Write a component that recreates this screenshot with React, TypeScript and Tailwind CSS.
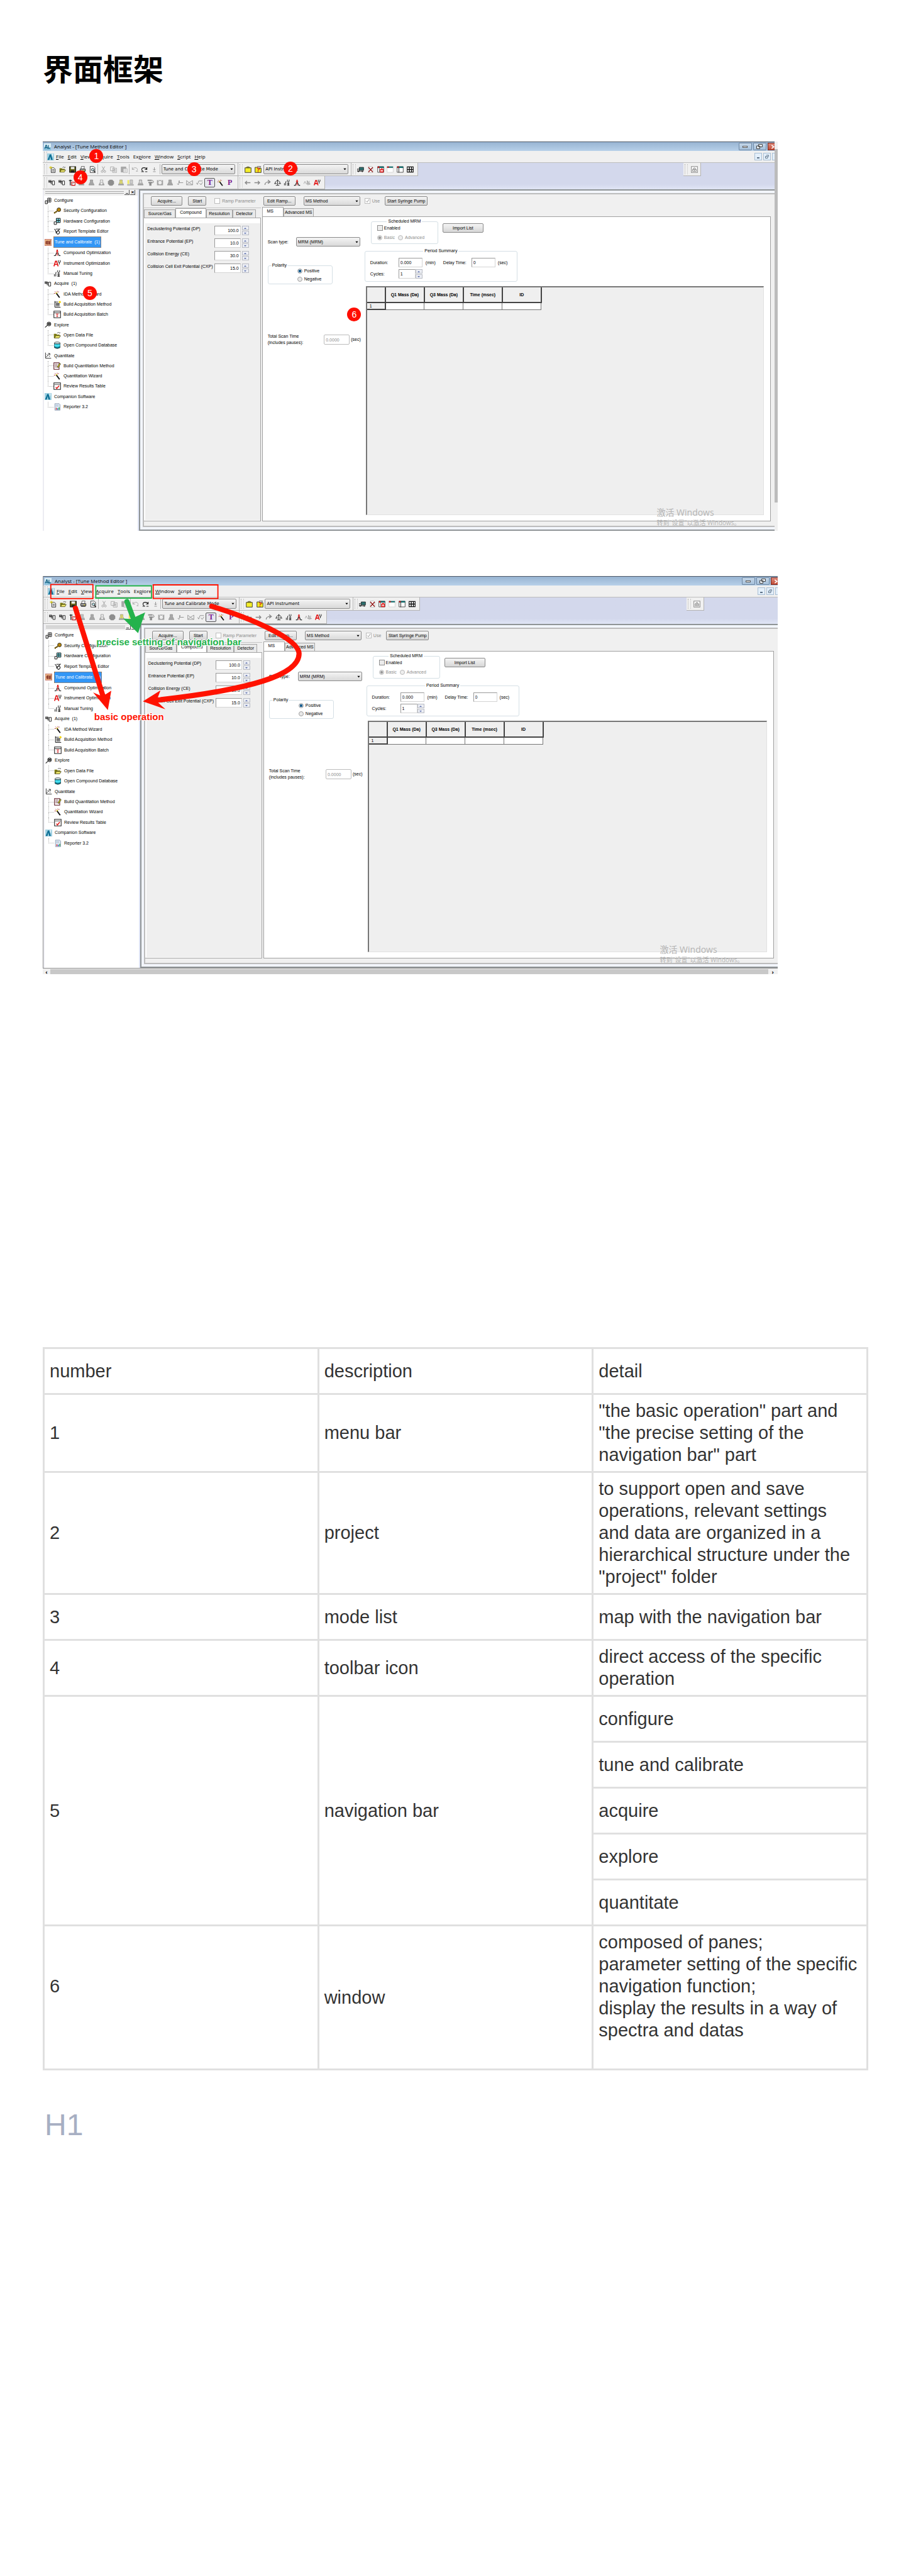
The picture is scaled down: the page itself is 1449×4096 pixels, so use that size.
import { useId, type ReactNode } from "react";

/* ---------- icon drawings, all on a 16 x 16 grid ---------- */

const tower = (fill: string, extra?: ReactNode) => (
  <>
    <path d="M5 1.500h6v5l2 4H3l2-4z" fill={fill} stroke="#8f8f8f" />
    <path d="M1.500 11h13v3h-13z" fill="#9a9a9a" />
    {extra}
  </>
);

const peak = (
  <>
    <path d="M1 14h3l3-7M15 14h-3L9 7M4.500 14v-2M11.500 14v-2" fill="none" stroke="#222" strokeWidth="1.500" />
    <path d="M8 2v12M5.500 5h5" stroke="#e01010" strokeWidth="1.600" />
    <circle cx="8" cy="2.500" r="1.500" fill="#e01010" />
  </>
);

const analyst = (
  <>
    <rect width="16" height="16" fill="#9fd0e2" />
    <path d="M1 15 6 2h3l4 13H9L7 7l-2 8z" fill="#0c6e93" />
    <path d="M11 2h3M12.500 1v6" stroke="#fff" strokeWidth="1.300" />
  </>
);

const folder = (
  <>
    <path d="M1 5h5l1.500 1.500H13V9H5l-2 5H1z" fill="#7c7a12" />
    <path d="M5 9h10l-3 5H2z" fill="#efe86a" stroke="#33320a" />
    <path d="M8 4c2-3 4-2 5 0l1-2" fill="none" stroke="#222" />
  </>
);

const wand = (
  <>
    <path d="M6 5.500 13 15" stroke="#111" strokeWidth="2.500" />
    <path d="M1 6h3M3 2l2 2M8 1v2M11 2l-1 2" stroke="#a33" strokeWidth="1.200" />
    <path d="M5 6.500 8 4" stroke="#d8c800" strokeWidth="1.500" />
  </>
);

const pump = (
  <>
    <path d="M1 3h5v4H1zM2 5h9" fill="none" stroke="#333" strokeWidth="1.500" />
    <path d="M9 4h5v9H9z" fill="#fff" stroke="#222" strokeWidth="1.400" />
    <path d="M4 8h6M5 10h4" stroke="#666" strokeWidth="1.500" />
  </>
);

const tuning = (
  <>
    <path d="M2 14V9M5 14V7q0-2 1.500-2" fill="none" stroke="#333" strokeWidth="1.500" />
    <path d="M9 1v4q2 2 4 0V1M11 6v2M8.500 9h5M11 9v5M8.500 14h5M8.500 11.500h5" fill="none" stroke="#222" strokeWidth="1.300" />
  </>
);

const instrument = (
  <>
    <path d="M1 14 4.500 3h2L10 14M3 10h5.500" fill="none" stroke="#e01010" strokeWidth="2.200" />
    <path d="M10.500 1v4q2 2 4 0V1M12.500 6v4" fill="none" stroke="#222" strokeWidth="1.400" />
  </>
);

const grid = (
  <>
    <path d="M7 1.500h7.500v9H7zM7 6h7.500M10.700 1.500v9" fill="#fff" stroke="#111" strokeWidth="1.300" />
    <path d="M1.500 7.500h5v7h-5z" fill="#ddd" stroke="#111" strokeWidth="1.300" />
  </>
);

const pane = (body: ReactNode) => (
  <>
    <path d="M1 1.500h14v13H1z" fill="#fff" stroke="#333" strokeWidth="1.200" />
    <path d="M1 1h14v3.500H1z" fill="#0e6a6a" />
    {body}
  </>
);

const ICONS: Record<string, ReactNode> = {
  analyst,
  folder,
  wand,
  pump,
  tuning,
  instrument,
  grid,
  peak,
  al: (
    <>
      <rect width="16" height="16" fill="#d9edf5" />
      <path d="M0 9h16v7H0z" fill="#8fc4dc" />
      <path d="M2 12 4.500 4h1L8 12M3 9.500h4M10 4v7.500h4" fill="none" stroke="#0c5c80" strokeWidth="1.800" />
    </>
  ),
  fresh: (
    <>
      <path d="M5 4h6l3 3v8H5z" fill="#fff" stroke="#222" strokeWidth="1.300" />
      <path d="M7 8h5M7 10h5M7 12h5" stroke="#333" />
      <path d="M4 0v7M0 3.500h8M1.500 1l5 5M6.500 1l-5 5" stroke="#d6c400" />
    </>
  ),
  save: (
    <>
      <path d="M1 1.500h14v13H1z" fill="#6b6a1c" stroke="#111" strokeWidth="1.600" />
      <path d="M4 2h8v5H4z" fill="#eee" />
      <path d="M4 10h8v5H4z" fill="#222" />
    </>
  ),
  print: (
    <>
      <path d="M5 1h7l-1 6H4z" fill="#fff" stroke="#222" />
      <path d="M2 7h12v5H2z" fill="#aaa" stroke="#222" strokeWidth="1.300" />
      <path d="M3 13h10" stroke="#222" strokeWidth="2" />
      <path d="M9 10h3" stroke="#d8c800" strokeWidth="1.500" />
    </>
  ),
  preview: (
    <>
      <path d="M2 1h8l3 3v11H2z" fill="#fff" stroke="#222" strokeWidth="1.200" />
      <circle cx="8" cy="8.500" r="3" fill="#bfe9ee" stroke="#222" strokeWidth="1.300" />
      <path d="m10 11 4 4" stroke="#222" strokeWidth="2" />
    </>
  ),
  cut: (
    <g fill="none" stroke="#9a9a9a" strokeWidth="1.300">
      <path d="m5 1 5 9M11 1 6 10" />
      <circle cx="5" cy="12.500" r="2.200" />
      <circle cx="11" cy="12.500" r="2.200" />
    </g>
  ),
  copy: (
    <g fill="#f4f4f4" stroke="#a0a0a0" strokeWidth="1.200">
      <path d="M1 2h8v9H1zM6 5h9v10H6z" />
      <path d="M8 8h5M8 10h5M8 12h5" />
    </g>
  ),
  paste: (
    <>
      <path d="M1 2h11v12H1z" fill="#a8a8a8" stroke="#999" />
      <path d="M6 6h9v9H6z" fill="#f4f4f4" stroke="#a0a0a0" />
      <path d="M8 9h5M8 12h5" stroke="#a0a0a0" />
    </>
  ),
  undo: <path d="M2 3v5h5M2 8c2-5 11-6 12 0 0 2-1 3-3 4h4" fill="none" stroke="#aaa" strokeWidth="1.400" />,
  redo: <path d="M14 3v5H9M14 8C12 3 3 2 2 8c0 2 1 3 3 4M1 13h6M10 13h5" fill="none" stroke="#222" strokeWidth="1.600" />,
  more: <path d="M8 3v7M5 7l3 3 3-3M5 13h6" fill="none" stroke="#888" strokeWidth="1.300" />,
  clip: (
    <>
      <path d="M1 4h14v11H1z" fill="#f4ee2a" stroke="#222" strokeWidth="1.200" />
      <path d="M4 4c0-3 8-3 8 0z" fill="#c8c21c" stroke="#222" />
    </>
  ),
  help: (
    <>
      <path d="M1 3h6l1 2h7v10H1z" fill="#f0e820" stroke="#222" strokeWidth="1.200" />
      <path d="M6 6q3-3 5 0 0 2-3 3v2M8 12.500v2" fill="none" stroke="#d01010" strokeWidth="1.600" />
      <path d="M6 1h8l-2 3" fill="none" stroke="#222" />
    </>
  ),
  truck: (
    <>
      <path d="M5 3h10v7H5z" fill="#2b6f6f" stroke="#222" strokeWidth="1.200" />
      <path d="M0 7h5v5H0zM3 12h12" fill="#ccc" stroke="#222" strokeWidth="1.200" />
      <circle cx="3" cy="12.500" r="1.500" fill="#222" />
      <circle cx="12" cy="12.500" r="1.500" fill="#222" />
    </>
  ),
  remove: (
    <>
      <path d="M3 1h8l2 2v12H3z" fill="#fff" stroke="#aaa" />
      <path d="m3 3 10 11M13 3 3 14" stroke="#8c1010" strokeWidth="2" />
    </>
  ),
  paneLock: pane(
    <>
      <path d="M1 1h4v3.500H1z" fill="#d01010" />
      <path d="M5 4v10" stroke="#333" />
      <path d="M7 8h7v6H7zM8.500 8c0-3 4-3 4 0" fill="#f6b0b0" stroke="#e01010" strokeWidth="1.500" />
    </>,
  ),
  paneDots: (
    <>
      <path d="M1 4h14v10.500H1z" fill="#fff" stroke="#999" strokeDasharray="1.500 1.500" />
      <path d="M1 1h14v3H1z" fill="#0e6a6a" />
      <path d="M1 1h4v3H1z" fill="#d01010" />
    </>
  ),
  paneSide: pane(
    <>
      <path d="M5 4v11" stroke="#333" strokeWidth="1.500" />
      <path d="M1 1h4v3H1z" fill="#d01010" />
    </>,
  ),
  paneGrid: (
    <>
      <path d="M1 2h14v12H1z" fill="#fff" stroke="#111" strokeWidth="1.600" />
      <path d="M6 2v12M11 2v12M1 8h14" stroke="#111" strokeWidth="2" />
    </>
  ),
  lock: <path d="M1 1h14v14H1zM4 8h8v4H4zM5.500 8c0-5 5-5 5 0M8 9v3" fill="#fff" stroke="#888" strokeWidth="1.500" />,
  gauge: (
    <>
      <path d="M1 3h7M4 1v13" stroke="#222" strokeWidth="1.800" />
      <path d="M7 7h8v7H7z" fill="#fff" stroke="#c01010" strokeWidth="1.500" />
      <path d="m8 12 4-4" stroke="#222" />
    </>
  ),
  t1: tower("#d4d4d4", <path d="M8 3v7" stroke="#888" />),
  t2: tower("#a8a8a8"),
  t3: tower("#e8e8e8", <circle cx="8" cy="10" r="3" fill="#eee" stroke="#999" />),
  stop: <path d="M5 1h6l4 4v6l-4 4H5l-4-4V5z" fill="#8e8e8e" />,
  t4: tower("#f1ea5e", <path d="M8 2v8" stroke="#999" />),
  t5: (
    <>
      <path d="M1 2h4v9H1z" fill="#f1ea5e" />
      <path d="M7 1.500h6v9H7zM1 12h14v2H1z" fill="#ccc" stroke="#999" />
    </>
  ),
  t6: tower("#b8b8b8", <path d="M7 3v6M9 3v6" stroke="#fff" />),
  t7: (
    <>
      <path d="M1 1h10v3H1zM3 6h9v3H3zM5 9h5v6H5z" fill="#8c8c8c" />
      <path d="m12 2 3 4-3 3" fill="none" stroke="#999" strokeWidth="1.500" />
    </>
  ),
  t8: (
    <>
      <path d="M1 2h14v12H1z" fill="#a4a4a4" />
      <circle cx="8" cy="8" r="4" fill="#ececec" />
      <path d="m3 2 5 4 5-4" fill="none" stroke="#fff" />
    </>
  ),
  line1: <path d="m1 10 3 3L6 3v5h9" fill="none" stroke="#8c8c8c" strokeWidth="1.300" />,
  line2: <path d="M1 13V3l6 5 8-5v10H1l6-5 8 5" fill="none" stroke="#8c8c8c" strokeWidth="1.200" />,
  line3: <path d="m0 8 3 4 3-8h9M8 9l3 4 4-6" fill="none" stroke="#8c8c8c" strokeWidth="1.300" />,
  back: <path d="M15 8H3M7 4 3 8l4 4" fill="none" stroke="#888" strokeWidth="2" />,
  forward: <path d="M1 8h12M9 4l4 4-4 4" fill="none" stroke="#888" strokeWidth="2" />,
  turn: <path d="M2 13c0-6 4-7 11-7M9 2l5 4-5 4" fill="none" stroke="#888" strokeWidth="2" />,
  scale: <path d="M8 1v13M2 7l6-5 6 5M0 10h6M10 10h6M3 7v3M13 7v3M4 14h8" fill="none" stroke="#222" strokeWidth="1.300" />,
  wave: <path d="m0 11 3-6 3 6M8 11V3l5 8M6 11h10M10 5v9M13 4v9" fill="none" stroke="#999" strokeWidth="1.100" />,
  key: (
    <>
      <circle cx="11.500" cy="6" r="4" fill="#b8860b" stroke="#222" strokeWidth="1.200" />
      <path d="M9 8 1 13M3 12v2M6 10v2" stroke="#6b5208" strokeWidth="2" />
    </>
  ),
  hardware: (
    <>
      <path d="M6 1.500h8.500v9H6zM6 6h8.500M10.200 1.500v9" fill="#7fe3ee" stroke="#111" strokeWidth="1.300" />
      <path d="M1.500 9h5v5.500h-5z" fill="#fff" stroke="#111" strokeWidth="1.300" />
    </>
  ),
  report: <path d="M2 3q3 2 3 5t4 6q4-1 4-5L10 6 6 9M5 3h8M9 8l5-6M5 12l3-3" fill="#fff" stroke="#222" strokeWidth="1.400" />,
  tune: (
    <>
      <path d="M0 1h16v14H0z" fill="#f3c48f" stroke="#a33" />
      <path d="M3 5v7M5 4v8h2V4M9 4v8h2V5M13 3v10" fill="none" stroke="#6b0f0f" strokeWidth="1.300" />
    </>
  ),
  method: (
    <>
      <path d="M3 1v13M3 3h7M3 14h12M5 6h8M5 8.500h8M5 11h8" stroke="#222" strokeWidth="1.400" />
      <circle cx="13.500" cy="3" r="2.200" fill="#f5d400" />
    </>
  ),
  batch: (
    <>
      <path d="M1 1h14v14H1z" fill="#fff" stroke="#222" strokeWidth="1.400" />
      <path d="M1 4.500h14" stroke="#222" strokeWidth="1.200" />
      <path d="M5 7h6M8 7v6M6 11l2 2 2-2" stroke="#d01010" strokeWidth="1.200" fill="none" />
    </>
  ),
  explore: (
    <>
      <circle cx="10" cy="6" r="4.500" fill="#aaa" stroke="#222" strokeWidth="1.300" />
      <path d="m7 4 6 4M13 4 7 8M6.500 9 1 14" stroke="#222" strokeWidth="1.600" />
    </>
  ),
  database: (
    <>
      <path d="M2 3v10q6 4 12 0V3z" fill="#0f7f94" stroke="#222" />
      <path d="M2 6v4q6 3 12 0V6z" fill="#46dff0" />
      <ellipse cx="8" cy="3" rx="6" ry="2" fill="#dff6fa" stroke="#222" />
    </>
  ),
  quant: <path d="M2 1v13h13M3 12l9-9M5 5l2 2M10 9l2 1M12 3v4M12 3H8" fill="none" stroke="#222" strokeWidth="1.300" />,
  quantMethod: (
    <>
      <path d="M1 1h11v14H1z" fill="#fff" stroke="#5a1520" strokeWidth="1.400" />
      <path d="M3 4h6M3 7h5M3 10h6" stroke="#5a1520" />
      <path d="m8 10 5-8 2 1.500-5 8z" fill="#f0e020" stroke="#111" />
    </>
  ),
  results: (
    <>
      <path d="M1 1h14v14H1z" fill="#fff" stroke="#222" strokeWidth="1.400" />
      <path d="M1 4.500h14" stroke="#888" strokeWidth="2" />
      <path d="m5 10 2 3 5-6" fill="none" stroke="#e01010" strokeWidth="1.800" />
    </>
  ),
  reporter: (
    <>
      <path d="M3 1h9l2 2v12H3z" fill="#dfeaf6" stroke="#7d8fa6" />
      <path d="M5 4h6M5 6.500h6" stroke="#7d8fa6" strokeDasharray="1.500 1" />
      <path d="M5 10h2v4H5z" fill="#d03030" />
      <path d="M8 11h2v3H8z" fill="#2a56c8" />
      <path d="M11 9h2v5h-2z" fill="#2fb04a" />
    </>
  ),
};

function Icon({ name, className = "size-[11px]" }: { name: string; className?: string }) {
  return (
    <svg viewBox="0 0 16 16" className={`${className} shrink-0`} aria-hidden="true">
      {ICONS[name]}
    </svg>
  );
}

/* ---------- small controls ---------- */

function Grip() {
  return (
    <span className="flex h-[16px] w-[5px] shrink-0 justify-between self-center">
      <span className="w-px border-l border-dotted border-[#b0b0b0]" />
      <span className="w-px border-l border-dotted border-[#c4c4c4]" />
    </span>
  );
}

function ToolButton({ name }: { name: string }) {
  return (
    <button type="button" aria-label={name} className="flex min-w-0 flex-1 items-center justify-center">
      <Icon name={name} />
    </button>
  );
}

function Letter({ children, framed }: { children: string; framed?: boolean }) {
  return (
    <button
      type="button"
      className={
        framed
          ? "flex h-[15px] w-[17px] shrink-0 items-center justify-center rounded-[2px] border border-[#555] bg-[#e6e6ee] font-['Liberation_Serif',serif] text-[12px] leading-none font-bold text-[#7a1a8c]"
          : "flex min-w-0 flex-1 items-center justify-center font-['Liberation_Serif',serif] text-[12px] leading-none font-bold text-[#7a1a8c]"
      }
    >
      {children}
    </button>
  );
}

function Separator() {
  return <span className="h-[16px] w-px shrink-0 self-center bg-[#b5b5b5]" />;
}

function Select({ label, value, className, textClass = "" }: { label: string; value: string; className: string; textClass?: string }) {
  return (
    <span className={`relative block shrink-0 ${className}`}>
      <select
        aria-label={label}
        defaultValue={value}
        className={`block h-full w-full appearance-none rounded-[2px] border border-[#8a8a8a] bg-linear-to-b from-[#f4f4f4] to-[#d9d9d9] pl-[2px] ${textClass}`}
      >
        <option>{value}</option>
      </select>
      <svg viewBox="0 0 6 4" className="pointer-events-none absolute top-1/2 right-[3px] h-[3px] w-[5px] -translate-y-1/2" aria-hidden="true">
        <path d="M0 0h6L3 4z" fill="#000" />
      </svg>
    </span>
  );
}

function PushButton({ children, className }: { children: string; className: string }) {
  return (
    <button
      type="button"
      className={`h-[15px] shrink-0 rounded-[2px] border border-[#8a8a8a] bg-linear-to-b from-[#f5f5f5] to-[#d6d6d6] text-center whitespace-nowrap ${className}`}
    >
      {children}
    </button>
  );
}

function Check({ label, checked, dim }: { label: string; checked?: boolean; dim?: boolean }) {
  return (
    <label className={dim ? "flex items-center gap-[3px] whitespace-nowrap text-[#8c8c8c]" : "flex items-center gap-[2px] whitespace-nowrap"}>
      <span className="relative block size-[9px]">
        <input
          type="checkbox"
          defaultChecked={checked}
          disabled={dim}
          className={dim ? "block size-full appearance-none border border-[#bdbdbd] bg-white" : "block size-full appearance-none border border-[#8f8f8f] bg-[#ececec]"}
        />
        {checked && (
          <svg viewBox="0 0 9 9" className="pointer-events-none absolute inset-0" aria-hidden="true">
            <path d="m2 4.500 2 2L7 2" fill="none" stroke="#999" />
          </svg>
        )}
      </span>
      {label}
    </label>
  );
}

function Radio({ label, name, checked, dim }: { label: string; name: string; checked?: boolean; dim?: boolean }) {
  return (
    <label className={dim ? "flex items-center gap-[3px] whitespace-nowrap text-[#8c8c8c]" : "flex items-center gap-[3px] whitespace-nowrap"}>
      <input
        type="radio"
        name={name}
        defaultChecked={checked}
        disabled={dim}
        className={
          dim
            ? "block size-[8px] appearance-none rounded-full border border-[#b9b9b9] bg-[#eeeeee] checked:bg-[radial-gradient(circle,#999_45%,#eee_55%)]"
            : "block size-[8px] appearance-none rounded-full border border-[#a0a0a0] bg-[#e8e8e8] checked:bg-[radial-gradient(circle,#1d5f8f_50%,#dfe9f2_60%)]"
        }
      />
      {label}
    </label>
  );
}

function Spinner() {
  return (
    <span className="flex h-[15px] w-[11px] shrink-0 flex-col gap-px">
      {["m0 3 2-2 2 2z", "M0 1h4L2 3z"].map((d, i) => (
        <button
          key={d}
          type="button"
          aria-label={i === 0 ? "Increase" : "Decrease"}
          className="flex flex-1 items-center justify-center border border-[#b9bcc4] bg-[#eceef4]"
        >
          <svg viewBox="0 0 4 4" className="size-[4px]" aria-hidden="true">
            <path d={d} fill="#5568a8" />
          </svg>
        </button>
      ))}
    </span>
  );
}

const field = "block h-[15px] border border-[#d4d4d4] border-t-[#9a9a9a] border-l-[#9a9a9a] bg-white px-[2px]";

/* ---------- application data ---------- */

const MENU: [string, string, string][] = [
  ["", "F", "ile"],
  ["", "E", "dit"],
  ["", "V", "iew"],
  ["", "A", "cquire"],
  ["", "T", "ools"],
  ["Ex", "p", "lore"],
  ["", "W", "indow"],
  ["", "S", "cript"],
  ["", "H", "elp"],
];

type Node = { label: string; icon: string; root?: boolean; selected?: boolean; last?: boolean };

const TREE: Node[] = [
  { label: "Configure", icon: "grid", root: true },
  { label: "Security Configuration", icon: "key" },
  { label: "Hardware Configuration", icon: "hardware" },
  { label: "Report Template Editor", icon: "report", last: true },
  { label: "Tune and Calibrate  (1)", icon: "tune", root: true, selected: true },
  { label: "Compound Optimization", icon: "peak" },
  { label: "Instrument Optimization", icon: "instrument" },
  { label: "Manual Tuning", icon: "tuning", last: true },
  { label: "Acquire  (1)", icon: "pump", root: true },
  { label: "IDA Method Wizard", icon: "wand" },
  { label: "Build Acquisition Method", icon: "method" },
  { label: "Build Acquisition Batch", icon: "batch", last: true },
  { label: "Explore", icon: "explore", root: true },
  { label: "Open Data File", icon: "folder" },
  { label: "Open Compound Database", icon: "database", last: true },
  { label: "Quantitate", icon: "quant", root: true },
  { label: "Build Quantitation Method", icon: "quantMethod" },
  { label: "Quantitation Wizard", icon: "wand" },
  { label: "Review Results Table", icon: "results", last: true },
  { label: "Companion Software", icon: "analyst", root: true },
  { label: "Reporter 3.2", icon: "reporter", last: true },
];

const POTENTIALS: [string, string][] = [
  ["Declustering Potential (DP)", "100.0"],
  ["Entrance Potential (EP)", "10.0"],
  ["Collision Energy (CE)", "30.0"],
  ["Collision Cell Exit Potential (CXP)", "15.0"],
];

/* ---------- window parts ---------- */

function TitleBar() {
  const frame = "flex h-[12px] w-[21px] items-center justify-center rounded-[1px] border border-[#6d87a3] bg-linear-to-b from-[#c4d6e8] to-[#a5c0da]";
  return (
    <header className="flex h-[15px] items-center overflow-hidden border-t border-[#4d5a68] bg-linear-to-b from-[#98b4d2] to-[#b7d0e9] pl-[2px]">
      <Icon name="al" />
      <span className="ml-[5px] font-['Open_Sans',sans-serif] text-[8px] whitespace-nowrap">Analyst - [Tune Method Editor ]</span>
      <span className="ml-auto flex items-start gap-[2px]">
        <button type="button" aria-label="Minimize" className={frame}>
          <span className="h-[3px] w-[8px] border border-[#555] bg-white" />
        </button>
        <button type="button" aria-label="Restore" className={frame}>
          <svg viewBox="0 0 10 8" className="h-[8px] w-[10px]" aria-hidden="true">
            <path d="M3.500.500h6v4h-6zM.500 3h5v4.500h-5z" fill="#e8eef4" stroke="#444" />
          </svg>
        </button>
        <button type="button" aria-label="Close" className="flex h-[12px] w-[11px] items-center justify-end rounded-l-[1px] border border-r-0 border-[#7a2a20] bg-linear-to-b from-[#dd8a7c] to-[#c14a34]">
          <svg viewBox="0 0 5 8" className="h-[7px] w-[5px]" aria-hidden="true">
            <path d="m0 1 4 3-4 3" fill="none" stroke="#fff" strokeWidth="1.800" />
          </svg>
        </button>
      </span>
    </header>
  );
}

function MenuBar() {
  const frame = "flex h-[12px] w-[12px] items-center justify-center border border-[#a9bfd4] bg-[#e3effa]";
  return (
    <nav className="flex h-[18px] items-center bg-[#f0f0f0] pl-[2px]">
      <Grip />
      <Icon name="analyst" />
      <span className="flex font-['Open_Sans',sans-serif] text-[8px]">
        {MENU.map(([pre, key, rest]) => (
          <button key={key + rest} type="button" className="px-[3px]">
            {pre}
            <span className="underline">{key}</span>
            {rest}
          </button>
        ))}
      </span>
      <span className="ml-auto flex gap-[2px]">
        <button type="button" aria-label="Minimize document" className={frame}>
          <span className="mt-[3px] h-[2px] w-[4px] bg-[#5d7288]" />
        </button>
        <button type="button" aria-label="Restore document" className={frame}>
          <svg viewBox="0 0 8 8" className="size-[6px]" aria-hidden="true">
            <path d="M2.500 1h5v3.500M.700 3.500h4.600v3.800H.700z" fill="none" stroke="#5d7288" strokeWidth="1.300" />
          </svg>
        </button>
        <button type="button" aria-label="Close document" className="h-[12px] w-[4px] border border-r-0 border-[#a9bfd4] bg-[#e3effa]" />
      </span>
    </nav>
  );
}

const strip = "flex h-full shrink-0 items-stretch border-r border-b border-[#b4b4b4] bg-[#f0f0f0] pl-[2px]";

function Toolbars() {
  const combo = "font-['DejaVu_Sans',sans-serif] text-[7px]";
  return (
    <div className="border-t border-[#bdbdbd] bg-linear-to-b from-[#d3d8ec] from-80% to-[#e0e5f5]">
      <div className="flex h-[21px]">
        <div className={`${strip} w-[26.7%]`}>
          <Grip />
          <span className="flex w-[26%] shrink-0">
            {["fresh", "folder", "save", "print", "preview"].map((n) => <ToolButton key={n} name={n} />)}
          </span>
          <Separator />
          <span className="flex w-[16%] shrink-0">
            {["cut", "copy", "paste"].map((n) => <ToolButton key={n} name={n} />)}
          </span>
          <Separator />
          <span className="flex min-w-0 flex-1">
            {["undo", "redo", "more"].map((n) => <ToolButton key={n} name={n} />)}
          </span>
          <Separator />
          <Select label="Mode" value="Tune and Calibrate Mode" className="mr-[4px] ml-[2px] h-[16px] w-[38%] self-center" textClass={combo} />
        </div>
        <div className={`${strip} w-[15.5%]`}>
          <Grip />
          <span className="flex min-w-0 flex-1">
            <ToolButton name="clip" />
            <ToolButton name="help" />
          </span>
          <Select label="Project" value="API Instrument" className="mr-[4px] h-[16px] w-[76%] self-center" textClass={combo} />
        </div>
        <div className={`${strip} w-[9.1%]`}>
          <Grip />
          <span className="flex min-w-0 flex-1 pr-[4px]">
            {["truck", "remove", "paneLock", "paneDots", "paneSide", "paneGrid"].map((n) => <ToolButton key={n} name={n} />)}
          </span>
        </div>
        <div className={`${strip} mr-[10%] ml-auto w-[28px]`}>
          <Grip />
          <ToolButton name="lock" />
        </div>
      </div>
      <div className="flex h-[21px]">
        <div className={`${strip} w-[26.7%] pr-[4px]`}>
          <Grip />
          <span className="flex min-w-0 flex-1 items-stretch">
            {["pump", "pump", "gauge", "t1", "t2", "t3", "stop", "t4", "t5", "t6", "t7", "t8", "t2", "line1", "line2", "line3"].map((n, i) => (
              <ToolButton key={i} name={n} />
            ))}
            <span className="flex items-center">
              <Letter framed>T</Letter>
            </span>
            <ToolButton name="wand" />
            <Letter>P</Letter>
          </span>
        </div>
        <div className={`${strip} w-[11.9%] pr-[4px]`}>
          <Grip />
          <span className="flex min-w-0 flex-1">
            {["back", "forward", "turn", "scale", "tuning", "peak", "wave", "instrument"].map((n) => <ToolButton key={n} name={n} />)}
          </span>
        </div>
      </div>
    </div>
  );
}

function Navigation() {
  return (
    <aside className="flex w-[13%] shrink-0 flex-col border-l-2 border-[#ececf2] bg-white">
      <div className="flex h-[10px] items-center gap-px bg-[#f0f0f0] pr-[4px] pl-[2px]">
        <span className="h-[4px] flex-1 border-y border-[#a8a8a8]" />
        <span className="flex size-[8px] items-end justify-center border-r border-b border-[#555] pb-px">
          <span className="h-px w-[4px] bg-[#444]" />
        </span>
        <span className="flex size-[8px] items-center justify-center border-r border-b border-[#555] text-[8px] leading-none font-bold">×</span>
      </div>
      <ul className="flex flex-[345] flex-col whitespace-pre">
        {TREE.map((n) =>
          n.root ? (
            <li key={n.label} className="flex flex-1 items-center gap-[3px] pl-px">
              <Icon name={n.icon} />
              <span className={n.selected ? "border border-dotted border-[#c87020] bg-[#3296f6] px-px py-[3px] text-white" : "px-px"}>{n.label}</span>
            </li>
          ) : (
            <li key={n.label} className="flex flex-1 items-stretch pl-[6px]">
              <span className="flex w-[9px] flex-col">
                <span className="flex-1 border-b border-l border-dotted border-[#b0b0b0]" />
                <span className={n.last ? "flex-1" : "flex-1 border-l border-dotted border-[#b0b0b0]"} />
              </span>
              <span className="flex items-center gap-[4px]">
                <Icon name={n.icon} className="size-[12px]" />
                {n.label}
              </span>
            </li>
          ),
        )}
      </ul>
      <div className="flex-[189]" />
    </aside>
  );
}

function Tab({ children, active, className = "" }: { children: string; active?: boolean; className?: string }) {
  return (
    <button
      type="button"
      role="tab"
      aria-selected={!!active}
      className={`${
        active ? "h-[15px] border border-b-0 border-[#a5a5a5] bg-white pb-[3px]" : "h-[13px] border border-b-0 border-[#a5a5a5] bg-[#e9e9e9]"
      } shrink-0 whitespace-nowrap ${className}`}
    >
      {children}
    </button>
  );
}

function CompoundPane() {
  const id = useId();
  return (
    <section className="flex w-[18.5%] shrink-0 flex-col">
      <div role="tablist" className="flex h-[16px] items-end border-t border-[#c4c4c4]">
        <Tab className="w-[27%]">Source/Gas</Tab>
        <Tab active className="w-[26%]">Compound</Tab>
        <Tab className="w-[23%]">Resolution</Tab>
        <Tab className="w-[20%]">Detector</Tab>
      </div>
      <div className="flex flex-1 border-t border-r border-b border-[#a5a5a5] bg-white pt-[8px] pb-px pl-[2px]">
        <div className="flex-1 bg-[#efefef] pt-[4px] pl-[3px]">
          {POTENTIALS.map(([label, value], i) => (
            <div key={label} className="flex h-[20px] items-start">
              <label htmlFor={id + i} className="min-w-0 flex-1 whitespace-nowrap">
                {label}
              </label>
              <input id={id + i} defaultValue={value} className={`${field} w-[42px] text-right`} />
              <span className="mr-[18px] ml-[2px]">
                <Spinner />
              </span>
            </div>
          ))}
        </div>
      </div>
    </section>
  );
}

const group = "min-w-0 rounded-[3px] border border-[#d5dfe5]";

function MassPane() {
  const id = useId();
  return (
    <section className="mr-[6px] ml-[2px] flex min-w-0 flex-1 flex-col">
      <div role="tablist" className="flex h-[14px] items-end">
        <Tab active className="w-[34px] pr-[8px]">MS</Tab>
        <Tab className="w-[48px]">Advanced MS</Tab>
      </div>
      <div className="flex flex-1 border border-[#a0a0a0] bg-white">
        <div className="w-[20.1%] shrink-0 pl-[8px]">
          <div className="mt-[32px] flex items-center">
            <span className="min-w-0 flex-1">Scan type:</span>
            <Select label="Scan type" value="MRM (MRM)" className="mr-[7px] h-[15px] w-[102px]" />
          </div>
          <fieldset className={`${group} mt-[26px] h-[34px] w-[103px]`}>
            <legend className="ml-[5px] px-px leading-[8px]">Polarity</legend>
            <div className="flex flex-col gap-[5px] pt-px pl-[46px] leading-[8px]">
              <Radio label="Positive" name={`${id}polarity`} checked />
              <Radio label="Negative" name={`${id}polarity`} />
            </div>
          </fieldset>
          <div className="mt-[78px] flex items-center">
            <label htmlFor={`${id}scan`} className="min-w-0 flex-1 leading-[10px]">
              Total Scan Time
              <br />
              (includes pauses):
            </label>
            <input id={`${id}scan`} defaultValue="0.0000" className="block h-[16px] w-[41px] rounded-[2px] border border-[#bcbcbc] bg-white px-[2px] text-[#8c8c8c]" />
            <span className="mr-[6px] ml-[2px]">(sec)</span>
          </div>
        </div>
        <div className="flex min-w-0 flex-1 flex-col">
          <div className="mt-[3px] ml-[10px] flex items-start">
            <fieldset className={`${group} h-[40px] w-[107px]`}>
              <legend className="mx-auto px-[2px] leading-[8px]">Scheduled MRM</legend>
              <div className="flex flex-col gap-[7px] pt-[2px] pl-[9px] leading-[8px]">
                <Check label="Enabled" />
                <div className="flex gap-[5px]">
                  <Radio label="Basic" name={`${id}schedule`} checked dim />
                  <Radio label="Advanced" name={`${id}schedule`} dim />
                </div>
              </div>
            </fieldset>
            <PushButton className="mt-[7px] ml-[7px] w-[65px]">Import List</PushButton>
          </div>
          <fieldset className={`${group} mt-[7px] h-[53px] w-[243px]`}>
            <legend className="mx-auto px-[2px] leading-[8px]">Period Summary</legend>
            <div className="flex flex-col gap-[3px] pt-[7px] pl-[8px]">
              <div className="flex items-center">
                <label htmlFor={`${id}duration`} className="w-[45px]">Duration:</label>
                <input id={`${id}duration`} defaultValue="0.000" className={`${field} w-[38px]`} />
                <span className="w-[33px] pl-[5px]">(min)</span>
                <label htmlFor={`${id}delay`} className="w-[45px]">Delay Time:</label>
                <input id={`${id}delay`} defaultValue="0" className={`${field} w-[38px]`} />
                <span className="pl-[4px]">(sec)</span>
              </div>
              <div className="flex items-center">
                <label htmlFor={`${id}cycles`} className="w-[45px]">Cycles:</label>
                <input id={`${id}cycles`} defaultValue="1" className={`${field} w-[27px]`} />
                <Spinner />
              </div>
            </div>
          </fieldset>
          <div className="mt-[7px] mr-[10px] mb-[9px] ml-[2px] flex-1 border-t-2 border-r border-b border-l-2 border-[#e2e2e2] border-t-[#777] border-l-[#777] bg-[#efefef]">
            <table className="table-fixed border-collapse text-center">
              <thead>
                <tr className="h-[24px] font-bold">
                  <th aria-label="Row" className="w-[29px] border-r-2 border-b-2 border-[#444]" />
                  {["Q1 Mass (Da)", "Q3 Mass (Da)", "Time (msec)", "ID"].map((h) => (
                    <th key={h} className="w-[62px] border-r-2 border-b-2 border-[#444] whitespace-nowrap">
                      {h}
                    </th>
                  ))}
                </tr>
              </thead>
              <tbody>
                <tr className="h-[11px] leading-[8px]">
                  <td className="border-r-2 border-b-2 border-[#444] pl-[4px] text-left">1</td>
                  {[0, 1, 2, 3].map((c) => (
                    <td key={c} className="border-r border-b border-[#777] bg-white" />
                  ))}
                </tr>
              </tbody>
            </table>
          </div>
        </div>
      </div>
    </section>
  );
}

function AnalystWindow() {
  return (
    <div className="relative flex min-h-0 min-w-0 flex-1 flex-col overflow-hidden font-['Liberation_Sans',sans-serif] text-[7px] leading-[10px] text-black">
      <TitleBar />
      <MenuBar />
      <Toolbars />
      <div className="flex flex-1">
        <Navigation />
        <div className="w-[2px] shrink-0 bg-[#dfe4f5]" />
        <div className="flex min-w-0 flex-1 flex-col border-t-2 border-b-2 border-l-2 border-[#8f9496] bg-[#f2f5fb] py-[4px] pl-[4px]">
          <div className="flex flex-1 flex-col border-t-2 border-b-2 border-l-2 border-[#bcbcbc] bg-[#f0f0f0] pb-[7px]">
            <div className="flex h-[21px] items-start pt-[3px]">
              <div className="flex w-[18.7%] shrink-0 items-center pl-[11px]">
                <PushButton className="w-[50px]">Acquire...</PushButton>
                <PushButton className="mr-[13px] ml-[9px] w-[29px]">Start</PushButton>
                <Check label="Ramp Parameter" dim />
              </div>
              <div className="flex items-center pl-[2px]">
                <PushButton className="w-[51px]">Edit Ramp...</PushButton>
                <Select label="Method type" value="MS Method" className="mr-[7px] ml-[13px] h-[15px] w-[90px]" />
                <Check label="Use" checked dim />
                <PushButton className="ml-[8px] w-[68px]">Start Syringe Pump</PushButton>
              </div>
            </div>
            <div className="flex flex-1">
              <CompoundPane />
              <MassPane />
            </div>
          </div>
        </div>
      </div>
      <div className="absolute right-[54px] bottom-[6px] font-['Open_Sans','Noto_Sans_CJK_SC',sans-serif] whitespace-nowrap text-[#b4b4b4]">
        <p className="text-[14px] leading-[18px]">激活 Windows</p>
        <p className="text-[10px] leading-[14px]">转到"设置"以激活 Windows。</p>
      </div>
    </div>
  );
}

/* ---------- annotations ---------- */

const BADGES = [
  { n: 1, x: 7.3, y: 23 },
  { n: 2, x: 33.7, y: 43 },
  { n: 3, x: 20.6, y: 44 },
  { n: 4, x: 5.1, y: 57 },
  { n: 5, x: 6.4, y: 241 },
  { n: 6, x: 42.4, y: 275 },
];

function NumberedShot() {
  return (
    <figure className="relative flex h-[619px] w-[89%]">
      <AnalystWindow />
      <div className="flex w-[5px] shrink-0 flex-col bg-[#f0f0f0] pt-[12px] pb-[45px]">
        <div className="flex-1 bg-[#bcbcbc]" />
      </div>
      {BADGES.map((b) => (
        <span
          key={b.n}
          style={{ left: `${b.x}%`, top: b.y }}
          className="absolute flex size-[22px] -translate-x-1/2 -translate-y-1/2 items-center justify-center rounded-full bg-[#ff0d00] font-['Liberation_Sans',sans-serif] text-[14px] leading-none text-white"
        >
          {b.n}
        </span>
      ))}
    </figure>
  );
}

function MarkedShot() {
  const halo = "[text-shadow:1px_0_#fff,-1px_0_#fff,0_1px_#fff,0_-1px_#fff,1px_1px_#fff,-1px_-1px_#fff]";
  return (
    <figure className="relative flex h-[633px] w-[89%] flex-col">
      <div className="flex min-h-0 flex-1 border-b border-l border-[#8f8f8f]">
        <AnalystWindow />
      </div>
      <div className="flex h-[9px] shrink-0 items-center bg-[#f0f0f0] pt-px">
        <span className="w-[12px] text-center text-[9px] leading-none font-bold">‹</span>
        <div className="h-full flex-1 bg-[#c8c8c8]" />
        <span className="w-[15px] text-center text-[9px] leading-none font-bold">›</span>
      </div>
      <svg viewBox="42 42 3838 2080" className="pointer-events-none absolute inset-0 size-full" preserveAspectRatio="none" aria-hidden="true">
        <path d="M84 86h220v74H84zM619 88h338v71H619z" fill="none" stroke="#ff1200" strokeWidth="6" />
        <path d="M319 93h291v64H319z" fill="none" stroke="#24b24c" strokeWidth="6" />
        <path d="M482 175 512 255" fill="none" stroke="#24b24c" strokeWidth="27" strokeLinecap="round" />
        <path d="m540 340-78-76 36 2 25-10 54-24z" fill="#24b24c" />
        <path d="M213 210 357 670" fill="none" stroke="#ff1200" strokeWidth="27" strokeLinecap="round" />
        <path d="m382 742-77-92 40 17 27-8 28-18z" fill="#ff1200" />
        <path d="M925 200C1130 262 1380 370 1381 448 1380 560 1130 635 640 690" fill="none" stroke="#ff1200" strokeWidth="27" strokeLinecap="round" />
        <path d="m565 697 92-58-17 45 6 20 37 34z" fill="#ff1200" />
      </svg>
      <strong className={`absolute top-[95px] left-[7.3%] font-['Liberation_Sans',sans-serif] text-[15px] leading-[20px] whitespace-nowrap text-[#24b24c] ${halo}`}>
        precise setting of navigation bar
      </strong>
      <strong className={`absolute top-[214px] left-[7%] font-['Liberation_Sans',sans-serif] text-[15px] leading-[20px] whitespace-nowrap text-[#ff1200] ${halo}`}>
        basic operation
      </strong>
    </figure>
  );
}

/* ---------- description table ---------- */

const cell = "border-3 border-[#e0e0e0] px-2 py-2 align-middle";
const ROWS: [string, string, string][] = [
  ["1", "menu bar", '"the basic operation" part and "the precise setting of the navigation bar" part'],
  ["2", "project", 'to support open and save operations, relevant settings and data are organized in a hierarchical structure under the "project" folder'],
  ["3", "mode list", "map with the navigation bar"],
  ["4", "toolbar icon", "direct access of the specific operation"],
];
const MODES = ["configure", "tune and calibrate", "acquire", "explore", "quantitate"];

function DescriptionTable() {
  return (
    <table className="w-full table-fixed border-collapse font-['Liberation_Sans',sans-serif] text-[29px] leading-[35px] text-[#333]">
      <thead>
        <tr className="h-[73px] text-left">
          {["number", "description", "detail"].map((h) => (
            <th key={h} scope="col" className={`${cell} font-normal`}>
              {h}
            </th>
          ))}
        </tr>
      </thead>
      <tbody>
        {ROWS.map((row) => (
          <tr key={row[0]} className="h-[73px]">
            {row.map((text) => (
              <td key={text} className={cell}>
                {text}
              </td>
            ))}
          </tr>
        ))}
        {MODES.map((mode, i) => (
          <tr key={mode} className="h-[73px]">
            {i === 0 && (
              <>
                <td rowSpan={5} className={cell}>5</td>
                <td rowSpan={5} className={cell}>navigation bar</td>
              </>
            )}
            <td className={cell}>{mode}</td>
          </tr>
        ))}
        <tr>
          <td className={cell}>
            <p className="pb-[35px]">6</p>
          </td>
          <td className={cell}>window</td>
          <td className={cell}>
            <p>composed of panes;</p>
            <p>parameter setting of the specific navigation function;</p>
            <p className="pb-[35px]">display the results in a way of spectra and datas</p>
          </td>
        </tr>
      </tbody>
    </table>
  );
}

export default function App() {
  return (
    <main className="flex min-h-screen flex-col bg-white px-[68px] pt-[79px]">
      <h1 className="font-['Noto_Sans_CJK_SC',sans-serif] text-[48px] leading-[56px] font-bold text-black">界面框架</h1>
      <div className="mt-[90px]">
        <NumberedShot />
      </div>
      <div className="mt-[72px]">
        <MarkedShot />
      </div>
      <div className="mt-[593px]">
        <DescriptionTable />
      </div>
      <h2 className="mt-[59px] pl-[3px] font-['Liberation_Sans',sans-serif] text-[48px] leading-[56px] text-[#a7afc3]">H1</h2>
    </main>
  );
}
